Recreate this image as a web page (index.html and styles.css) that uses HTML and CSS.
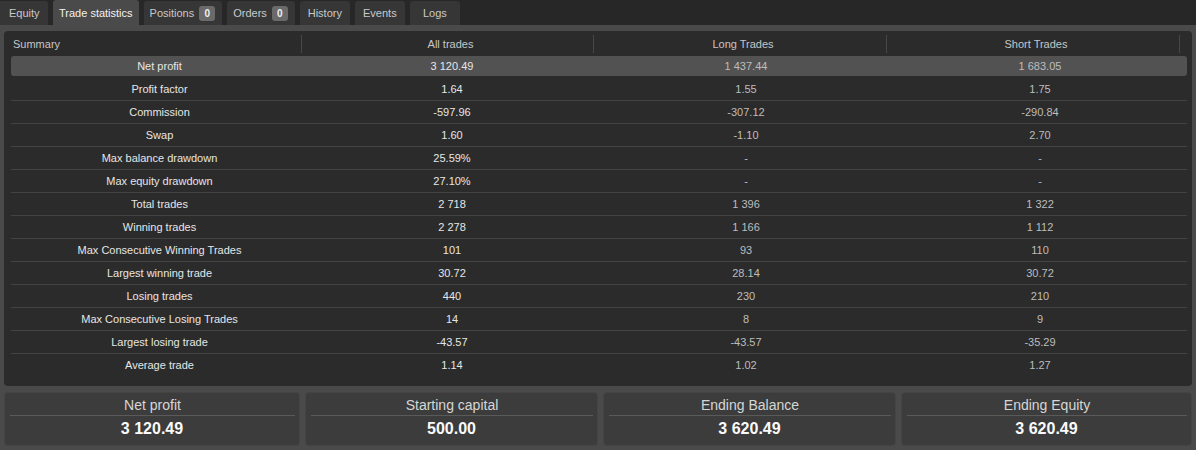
FILE: index.html
```html
<!DOCTYPE html>
<html>
<head>
<meta charset="utf-8">
<link rel="stylesheet" href="styles.css">
</head>
<body>
<div class="tabs">
  <div class="tab tab-first">Equity</div>
  <div class="tab active">Trade statistics</div>
  <div class="tab">Positions <span class="badge">0</span></div>
  <div class="tab">Orders <span class="badge">0</span></div>
  <div class="tab fixed">History</div>
  <div class="tab fixed">Events</div>
  <div class="tab fixed">Logs</div>
</div>
<div class="main">
  <div class="panel">
    <div class="thead">
      <div class="th th-left">Summary</div>
      <div class="th">All trades</div>
      <div class="th">Long Trades</div>
      <div class="th">Short Trades</div>
    </div>
    <div class="row hl"><div>Net profit</div><div>3 120.49</div><div class="dim">1 437.44</div><div class="dim">1 683.05</div></div>
    <div class="row"><div>Profit factor</div><div>1.64</div><div class="dim">1.55</div><div class="dim">1.75</div></div>
    <div class="row"><div>Commission</div><div>-597.96</div><div class="dim">-307.12</div><div class="dim">-290.84</div></div>
    <div class="row"><div>Swap</div><div>1.60</div><div class="dim">-1.10</div><div class="dim">2.70</div></div>
    <div class="row"><div>Max balance drawdown</div><div>25.59%</div><div class="dim">-</div><div class="dim">-</div></div>
    <div class="row"><div>Max equity drawdown</div><div>27.10%</div><div class="dim">-</div><div class="dim">-</div></div>
    <div class="row"><div>Total trades</div><div>2 718</div><div class="dim">1 396</div><div class="dim">1 322</div></div>
    <div class="row"><div>Winning trades</div><div>2 278</div><div class="dim">1 166</div><div class="dim">1 112</div></div>
    <div class="row"><div>Max Consecutive Winning Trades</div><div>101</div><div class="dim">93</div><div class="dim">110</div></div>
    <div class="row"><div>Largest winning trade</div><div>30.72</div><div class="dim">28.14</div><div class="dim">30.72</div></div>
    <div class="row"><div>Losing trades</div><div>440</div><div class="dim">230</div><div class="dim">210</div></div>
    <div class="row"><div>Max Consecutive Losing Trades</div><div>14</div><div class="dim">8</div><div class="dim">9</div></div>
    <div class="row"><div>Largest losing trade</div><div>-43.57</div><div class="dim">-43.57</div><div class="dim">-35.29</div></div>
    <div class="row last"><div>Average trade</div><div>1.14</div><div class="dim">1.02</div><div class="dim">1.27</div></div>
  </div>
  <div class="cards">
    <div class="card"><div class="card-title">Net profit</div><div class="card-value">3 120.49</div></div>
    <div class="card"><div class="card-title">Starting capital</div><div class="card-value">500.00</div></div>
    <div class="card"><div class="card-title">Ending Balance</div><div class="card-value">3 620.49</div></div>
    <div class="card"><div class="card-title">Ending Equity</div><div class="card-value">3 620.49</div></div>
  </div>
</div>
</body>
</html>
```
FILE: styles.css
```css
* { box-sizing: border-box; }
html, body { margin: 0; padding: 0; }
body {
  width: 1196px;
  height: 450px;
  overflow: hidden;
  background: #272727;
  font-family: "Liberation Sans", Arial, sans-serif;
  font-size: 11px;
  color: #e4e4e4;
}
.tabs {
  height: 25px;
  display: flex;
  align-items: flex-end;
  gap: 5px;
}
.tab {
  height: 24px;
  line-height: 24px;
  padding: 0 7px 0 6px;
  background: #363636;
  color: #c9c9c9;
  border-radius: 3px 3px 0 0;
  display: flex;
  align-items: center;
  gap: 5px;
  white-space: nowrap;
}
.tab-first { width: 48px; padding: 0 0 0 9px; border-radius: 0 3px 0 0; }
.tab.fixed { width: 50px; justify-content: center; padding: 0; }
.tab.active {
  background: #4a4a4a;
  color: #f2f2f2;
  padding: 0 6px;
  height: 25px;
}
.badge {
  display: inline-block;
  width: 16px;
  height: 15px;
  line-height: 15px;
  text-align: center;
  background: #6a6a6a;
  color: #f0f0f0;
  border-radius: 3px;
  font-size: 10px;
  font-weight: bold;
}
.main {
  height: 425px;
  background: #4a4a4a;
  padding: 6px 4px 4px;
}
.panel {
  height: 355px;
  background: #2b2b2b;
  border-radius: 4px;
  padding: 0 5px 0 7px;
}
.thead {
  height: 25px;
  display: grid;
  grid-template-columns: 291px 292px 293px 293px;
  align-items: center;
  color: #c6c6c6;
}
.th {
  height: 18px;
  line-height: 18px;
  border-right: 1px solid #474747;
  text-align: center;
  padding-left: 6px;
}
.th-left { text-align: left; padding-left: 2px; }
.row {
  display: grid;
  grid-template-columns: repeat(4, 1fr);
  height: 23px;
  line-height: 22px;
  border-bottom: 1px solid #434343;
  text-align: center;
  color: #e6e6e6;
}
.row > div:first-child { padding-left: 3px; }
.row.hl {
  height: 20px;
  line-height: 20px;
  margin-bottom: 2px;
  background: #525252;
  border-radius: 3px;
  border-bottom: none;
}
.row.last { border-bottom: none; }
.dim { color: #bdbdbd; }
.cards {
  margin-top: 6px;
  height: 54px;
  display: grid;
  grid-template-columns: 296px 293px 293px 291px;
  gap: 5px;
}
.card {
  background: #3c3c3c;
  border: 1px solid #444;
  border-radius: 4px;
  text-align: center;
}
.card-title {
  margin: 0 4px 0 5px;
  height: 23px;
  line-height: 20px;
  padding-top: 2px;
  border-bottom: 1px solid #5a5a5a;
  font-size: 14px;
  color: #d6d6d6;
}
.card-value {
  line-height: 25px;
  font-size: 16px;
  font-weight: bold;
  color: #fafafa;
}
```
